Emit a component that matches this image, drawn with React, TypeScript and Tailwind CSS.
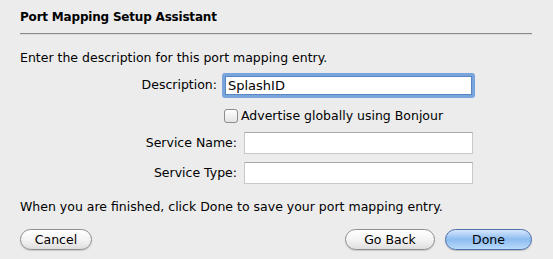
export default function App() {
  return (
    <div className="w-[553px] h-[259px] bg-[#ececec] text-[12.5px] text-black font-['DejaVu_Sans',sans-serif] overflow-hidden">
      <div className="pl-[20px] pr-[21px] pt-[9px]">
        <div className="font-bold text-[12px] tracking-[-0.2px] leading-[16px] h-[16px]">Port Mapping Setup Assistant</div>
        <div className="mt-[8px] h-[2px] bg-[#8a8a8a] border-b border-[#dcdcdc]" />
        <div className="mt-[15px] leading-[16px]">Enter the description for this port mapping entry.</div>

        {/* Description row */}
        <div className="mt-[7px] flex items-center h-[25px]">
          <div className="w-[197px] text-right">Description:</div>
          <div className="ml-[5px] w-[253px] h-[25px] rounded-[3px] bg-[#7aa4dc] p-[3px]">
            <div className="h-full bg-white border border-[#5b86c4] flex items-center px-[2px] leading-[16px] text-[13px]">
              SplashID
            </div>
          </div>
        </div>

        {/* Bonjour checkbox */}
        <div className="mt-[11px] flex items-center h-[14px] pl-[204px]">
          <div className="w-[14px] h-[14px] rounded-[3px] border border-[#8d8d8d] bg-gradient-to-b from-white to-[#e4e4e4] shadow-[inset_0_1px_0_#fff]" />
          <div className="ml-[3px] leading-[16px]">Advertise globally using Bonjour</div>
        </div>

        {/* Service Name */}
        <div className="mt-[9px] flex items-center h-[22px]">
          <div className="w-[217px] text-right">Service Name:</div>
          <div className="ml-[7px] w-[229px] h-[22px] bg-white border border-[#c8c8c8] border-t-[#a9a9a9]" />
        </div>

        {/* Service Type */}
        <div className="mt-[8px] flex items-center h-[22px]">
          <div className="w-[217px] text-right">Service Type:</div>
          <div className="ml-[7px] w-[229px] h-[22px] bg-white border border-[#c8c8c8] border-t-[#a9a9a9]" />
        </div>

        <div className="mt-[15px] leading-[16px]">When you are finished, click Done to save your port mapping entry.</div>

        <div className="mt-[14px] flex items-center">
          <button className="w-[72px] h-[21px] rounded-full border border-[#8e8e8e] bg-gradient-to-b from-white via-[#f4f4f4] to-[#dedede] leading-[19px] shadow-[0_1px_1px_rgba(0,0,0,0.15)]">
            Cancel
          </button>
          <div className="flex-1" />
          <button className="w-[90px] h-[21px] rounded-full border border-[#8e8e8e] bg-gradient-to-b from-white via-[#f4f4f4] to-[#dedede] leading-[19px] shadow-[0_1px_1px_rgba(0,0,0,0.15)]">
            Go Back
          </button>
          <button className="ml-[10px] w-[87px] h-[21px] rounded-full border border-[#4e6fa8] bg-gradient-to-b from-[#d4e6fb] via-[#8cbcf0] to-[#b9dafa] leading-[19px] shadow-[0_1px_1px_rgba(0,0,0,0.2)]">
            Done
          </button>
        </div>
      </div>
    </div>
  )
}
